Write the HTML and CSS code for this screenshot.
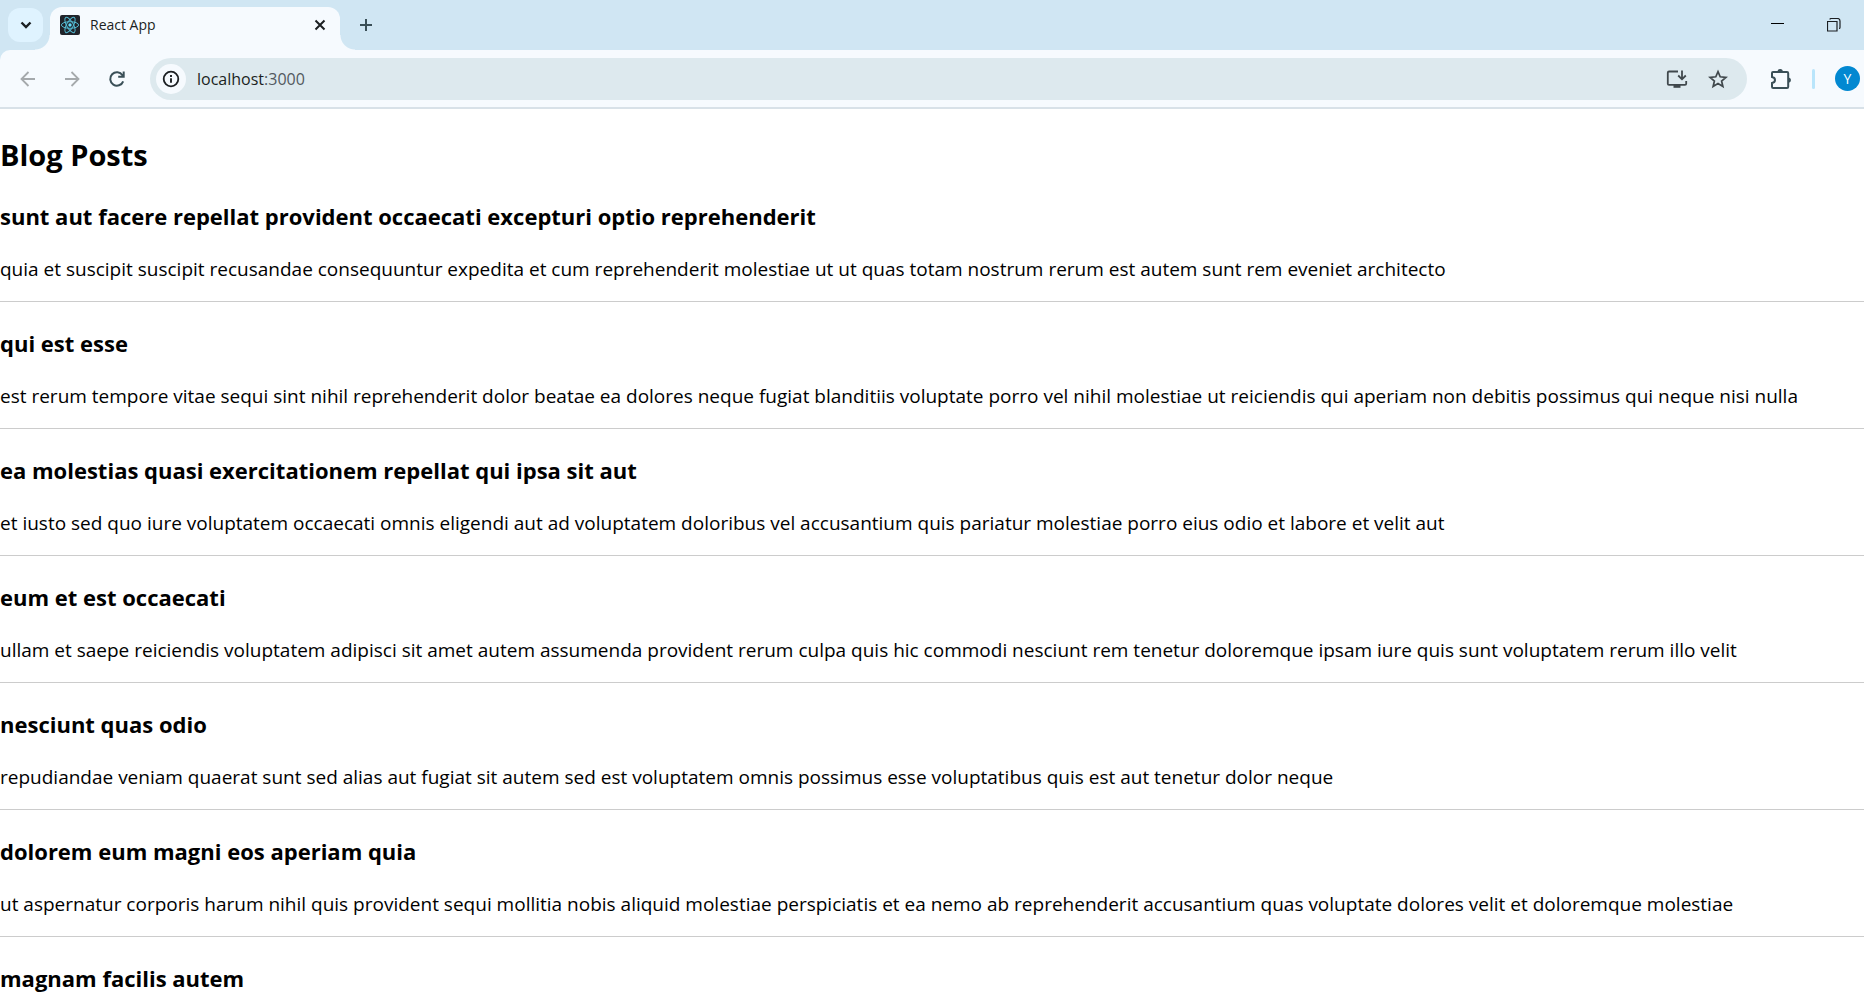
FILE: index.html
```html
<!DOCTYPE html>
<html lang="en">
<head>
<meta charset="utf-8">
<title>React App</title>
<link rel="stylesheet" href="styles.css">
</head>
<body>
<header class="browser">
  <div class="tab-strip">
    <button class="tab-search" type="button" aria-label="Search tabs">
      <svg class="icon" width="20" height="20" viewBox="0 0 20 20"><path d="M5.5 7.5l4.5 4.5 4.5-4.5" stroke-width="2.4"/></svg>
    </button>
    <div class="tab">
      <svg class="favicon" width="20" height="20" viewBox="0 0 20 20">
        <rect width="20" height="20" rx="2" fill="#20232a"/>
        <g fill="none" stroke="#53b9d1" stroke-width="1">
          <ellipse cx="10" cy="10" rx="8.6" ry="3.3"/>
          <ellipse cx="10" cy="10" rx="8.6" ry="3.3" transform="rotate(60 10 10)"/>
          <ellipse cx="10" cy="10" rx="8.6" ry="3.3" transform="rotate(120 10 10)"/>
        </g>
        <circle cx="10" cy="10" r="1.7" fill="#61dafb"/>
      </svg>
      <span class="tab-title">React App</span>
      <button class="plain" type="button" aria-label="Close tab">
        <svg class="icon" width="20" height="20" viewBox="0 0 20 20"><path d="M5.5 5.5l9 9m0-9l-9 9" stroke-width="2"/></svg>
      </button>
    </div>
    <button class="plain new-tab" type="button" aria-label="New tab">
      <svg class="icon slate" width="20" height="20" viewBox="0 0 20 20"><path d="M10 4v12M4 10h12" stroke-width="2"/></svg>
    </button>
    <div class="window-controls">
      <button class="plain" type="button" aria-label="Minimize">
        <svg class="icon" width="14" height="14" viewBox="0 0 14 14"><path d="M0 5.5h13" stroke="#000" stroke-width="1"/></svg>
      </button>
      <button class="plain" type="button" aria-label="Restore">
        <svg class="icon" width="14" height="14" viewBox="0 0 14 14"><path d="M.5 3.5h9.500v9.500H.5zM3 1.500q0-1 1-1h6.500q2.500 0 2.500 2.500v6.500q0 1-1 1" stroke-width="1.2"/></svg>
      </button>
    </div>
  </div>
  <div class="toolbar">
    <nav class="nav-buttons">
      <button class="plain" type="button" aria-label="Back" disabled>
        <svg class="icon muted" width="20" height="20" viewBox="0 0 20 20"><path d="M17 10H4M10.500 3l-7 7 7 7" stroke-width="1.800"/></svg>
      </button>
      <button class="plain" type="button" aria-label="Forward" disabled>
        <svg class="icon muted" width="20" height="20" viewBox="0 0 20 20"><path d="M3 10h13M9.500 3l7 7-7 7" stroke-width="1.800"/></svg>
      </button>
      <button class="plain" type="button" aria-label="Reload">
        <svg class="icon slate" width="20" height="20" viewBox="0 0 20 20"><path d="M17.200 12.300A6.700 6.700 0 1 1 16.500 6.200l.8 1M17.700 2.500v5.300h-5.500" stroke-width="2"/></svg>
      </button>
    </nav>
    <div class="address-bar">
      <button class="site-info" type="button" aria-label="Site information">
        <svg class="icon" width="20" height="20" viewBox="0 0 20 20"><circle cx="10" cy="10" r="7.300" stroke-width="1.800"/><path d="M10 9.300v4.500M10 6v1.900" stroke-width="1.900"/></svg>
      </button>
      <div class="url" role="textbox" aria-label="Address" tabindex="0">localhost<span class="port">:3000</span></div>
      <button class="plain" type="button" aria-label="Install app">
        <svg class="icon gray" width="22" height="20" viewBox="0 0 22 20"><path d="M12 2.500H3q-1.200 0-1.200 1.200v11q0 1.200 1.200 1.200h16q1.200 0 1.200-1.200V12M16 1.500v8M12.200 6.500l3.800 3.800 3.800-3.800" stroke-width="1.800"/><path d="M7.500 16v2.800h7V16z" fill="currentColor" stroke="none"/></svg>
      </button>
      <button class="plain" type="button" aria-label="Bookmark this page">
        <svg class="icon gray" width="20" height="20" viewBox="0 0 20 20"><path d="M10 2.600l2.200 5.200 5.700.5-4.300 3.700 1.300 5.500-4.900-2.900-4.900 2.900 1.300-5.500-4.300-3.700 5.700-.5z" stroke-width="1.700"/></svg>
      </button>
    </div>
    <div class="toolbar-end">
      <button class="plain" type="button" aria-label="Extensions">
        <svg class="icon slate" width="22" height="22" viewBox="0 0 22 22"><path d="M3 4h14q1.200 0 1.200 1.200v13.600q0 1.200-1.200 1.200H3.200Q2 20 2 18.800V15q3-.5 3-3T2 9V5q0-1 1-1z" stroke-width="2"/><path d="M7.500 4a2.700 2.900 0 0 1 5.400 0zM18 9.400a2.900 2.700 0 0 1 0 5.400z" fill="currentColor" stroke="none"/></svg>
      </button>
      <span class="divider"></span>
      <button class="avatar" type="button" aria-label="Profile">Y</button>
    </div>
  </div>
</header>
<main class="page">
  <h2 class="page-title">Blog Posts</h2>
  <article class="post">
    <h3 class="post-title">sunt aut facere repellat provident occaecati excepturi optio reprehenderit</h3>
    <p class="post-body">quia et suscipit suscipit recusandae consequuntur expedita et cum reprehenderit molestiae ut ut quas totam nostrum rerum est autem sunt rem eveniet architecto</p>
  </article>
  <article class="post">
    <h3 class="post-title">qui est esse</h3>
    <p class="post-body">est rerum tempore vitae sequi sint nihil reprehenderit dolor beatae ea dolores neque fugiat blanditiis voluptate porro vel nihil molestiae ut reiciendis qui aperiam non debitis possimus qui neque nisi nulla</p>
  </article>
  <article class="post">
    <h3 class="post-title">ea molestias quasi exercitationem repellat qui ipsa sit aut</h3>
    <p class="post-body">et iusto sed quo iure voluptatem occaecati omnis eligendi aut ad voluptatem doloribus vel accusantium quis pariatur molestiae porro eius odio et labore et velit aut</p>
  </article>
  <article class="post">
    <h3 class="post-title">eum et est occaecati</h3>
    <p class="post-body">ullam et saepe reiciendis voluptatem adipisci sit amet autem assumenda provident rerum culpa quis hic commodi nesciunt rem tenetur doloremque ipsam iure quis sunt voluptatem rerum illo velit</p>
  </article>
  <article class="post">
    <h3 class="post-title">nesciunt quas odio</h3>
    <p class="post-body">repudiandae veniam quaerat sunt sed alias aut fugiat sit autem sed est voluptatem omnis possimus esse voluptatibus quis est aut tenetur dolor neque</p>
  </article>
  <article class="post">
    <h3 class="post-title">dolorem eum magni eos aperiam quia</h3>
    <p class="post-body">ut aspernatur corporis harum nihil quis provident sequi mollitia nobis aliquid molestiae perspiciatis et ea nemo ab reprehenderit accusantium quas voluptate dolores velit et doloremque molestiae</p>
  </article>
  <article class="post">
    <h3 class="post-title">magnam facilis autem</h3>
  </article>
</main>
</body>
</html>
```
FILE: styles.css
```css
* { box-sizing: border-box; }

body {
  margin: 0;
  height: 100vh;
  display: flex;
  flex-direction: column;
  overflow: hidden;
  background: #fff;
  color: #000;
  font-family: "Segoe UI", "Open Sans", "Noto Sans", sans-serif;
}

button {
  margin: 0;
  padding: 0;
  border: 0;
  font: inherit;
  color: inherit;
}

.icon {
  display: block;
  fill: none;
  stroke: currentColor;
  color: #1b1f22;
}
.icon.slate { color: #3a4f57; }
.icon.gray { color: #40484c; }
.icon.muted { color: #a5a9ac; }

.plain { background: none; flex: none; }

/* Browser frame */
.browser { flex: none; background: #d0e6f3; }

.tab-strip {
  display: flex;
  align-items: center;
  height: 50px;
  padding: 0 23px 0 8px;
}

.tab-search {
  display: grid;
  place-items: center;
  width: 35px;
  height: 34px;
  border-radius: 12px;
  background: #dff3ff;
}

.tab {
  position: relative;
  align-self: flex-end;
  display: flex;
  align-items: center;
  gap: 10px;
  width: 290px;
  height: 43px;
  margin-left: 7px;
  padding: 0 10px 7px;
  border-radius: 12px 12px 0 0;
  background: #f6fafe;
}

.tab::before,
.tab::after {
  content: "";
  position: absolute;
  bottom: 0;
  width: 15px;
  height: 15px;
}
.tab::before {
  right: 100%;
  background: radial-gradient(circle at 0 0, transparent 14px, #f6fafe 15px);
}
.tab::after {
  left: 100%;
  background: radial-gradient(circle at 100% 0, transparent 14px, #f6fafe 15px);
}

.tab-title { flex: 1; font-size: 14px; line-height: 20px; color: #1b1f22; }
.new-tab { margin-left: 16px; }

.window-controls {
  display: flex;
  gap: 42px;
  margin-left: auto;
}

.toolbar {
  display: flex;
  align-items: center;
  height: 59px;
  padding: 0 4px 0 18px;
  border-bottom: 2px solid #d8e1e8;
  border-radius: 10px 0 0 0;
  background: #f6fafe;
}

.nav-buttons { display: flex; gap: 24px; }

.address-bar {
  flex: 1;
  display: flex;
  align-items: center;
  gap: 20px;
  height: 42px;
  margin-left: 24px;
  padding: 0 19px 0 6px;
  border-radius: 21px;
  background: #dde9ee;
}

.site-info {
  display: grid;
  place-items: center;
  width: 30px;
  height: 30px;
  border-radius: 50%;
  background: #f6fafe;
}

.url {
  flex: 1;
  margin-left: -9px;
  font-size: 16px;
  line-height: 24px;
  color: #1b1f22;
}
.port { color: #52595e; }

.toolbar-end {
  display: flex;
  align-items: center;
  gap: 20px;
  margin-left: 23px;
}
.divider { width: 3px; height: 20px; border-radius: 2px; background: #b9e5fb; }
.avatar {
  width: 25px;
  height: 25px;
  border-radius: 50%;
  background: #0288d1;
  color: #fff;
  font-size: 14px;
  line-height: 25px;
}

/* Blog page */
.page { flex: 1; padding-top: 26px; }

.page-title {
  margin: 0 0 26px;
  font-size: 29px;
  line-height: 40px;
  font-weight: 700;
}

.post { border-bottom: 1px solid #ccc; padding-bottom: 18px; }
.post + .post { padding-top: 26px; }
.post:last-child { border-bottom: 0; }

.post-title {
  margin: 0 0 24px;
  font-size: 22px;
  line-height: 30px;
  font-weight: 700;
}

.post-body { margin: 0; font-size: 19px; line-height: 28px; }
```
